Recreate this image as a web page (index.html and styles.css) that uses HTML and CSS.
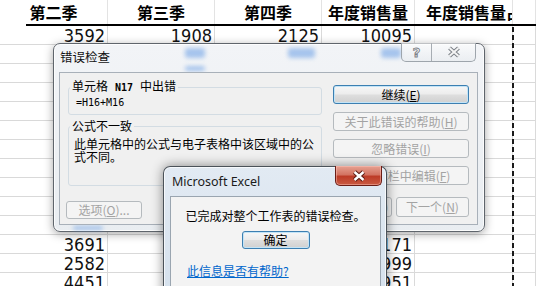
FILE: index.html
```html
<!DOCTYPE html>
<html>
<head>
<meta charset="utf-8">
<link rel="stylesheet" href="styles.css">
</head>
<body>
<div class="screen">
  <div class="sheet">
    <div class="row head">
      <div class="cell">第二季</div><div class="cell">第三季</div><div class="cell">第四季</div><div class="cell">年度销售量</div><div class="cell clip">年度销售量占比</div><div class="cell"></div>
    </div>
    <div class="rule"></div>
    <div class="row"><div class="cell num">3592</div><div class="cell num">1908</div><div class="cell num">2125</div><div class="cell num">10095</div><div class="cell"></div><div class="cell"></div></div>
    <div class="row"><div class="cell num">2861</div><div class="cell num">1597</div><div class="cell num">3082</div><div class="cell num">9830</div><div class="cell"></div><div class="cell"></div></div>
    <div class="row"><div class="cell num">3120</div><div class="cell num">2456</div><div class="cell num">2893</div><div class="cell num">10524</div><div class="cell"></div><div class="cell"></div></div>
    <div class="row"><div class="cell num">2987</div><div class="cell num">2215</div><div class="cell num">3310</div><div class="cell num">10376</div><div class="cell"></div><div class="cell"></div></div>
    <div class="row"><div class="cell num">3465</div><div class="cell num">1872</div><div class="cell num">2741</div><div class="cell num">9950</div><div class="cell"></div><div class="cell"></div></div>
    <div class="row"><div class="cell num">2734</div><div class="cell num">2690</div><div class="cell num">3158</div><div class="cell num">10802</div><div class="cell"></div><div class="cell"></div></div>
    <div class="row"><div class="cell num">3011</div><div class="cell num">2147</div><div class="cell num">2566</div><div class="cell num">9873</div><div class="cell"></div><div class="cell"></div></div>
    <div class="row"><div class="cell num">3278</div><div class="cell num">1935</div><div class="cell num">3024</div><div class="cell num">10441</div><div class="cell"></div><div class="cell"></div></div>
    <div class="row"><div class="cell num">2645</div><div class="cell num">2503</div><div class="cell num">2871</div><div class="cell num">9962</div><div class="cell"></div><div class="cell"></div></div>
    <div class="row"><div class="cell num">3390</div><div class="cell num">2268</div><div class="cell num">2715</div><div class="cell num">10539</div><div class="cell"></div><div class="cell"></div></div>
    <div class="row"><div class="cell num">3154</div><div class="cell num">1789</div><div class="cell num">3206</div><div class="cell num">10227</div><div class="cell"></div><div class="cell"></div></div>
    <div class="row"><div class="cell num">3691</div><div class="cell num">2740</div><div class="cell num">2258</div><div class="cell num">10171</div><div class="cell"></div><div class="cell"></div></div>
    <div class="row"><div class="cell num">2582</div><div class="cell num">3117</div><div class="cell num">2864</div><div class="cell num">10999</div><div class="cell"></div><div class="cell"></div></div>
    <div class="row"><div class="cell num">4451</div><div class="cell num">2085</div><div class="cell num">1963</div><div class="cell num">10951</div><div class="cell"></div><div class="cell"></div></div>
  </div>

  <div class="pagebreak"></div>

  <div class="win err">
    <div class="blob b1"></div><div class="blob b2"></div><div class="blob b3"></div><div class="blob b4"></div><div class="blob b5"></div>
    <div class="wtitle">错误检查</div>
    <div class="capbtns">
      <div class="cap help">?</div>
      <div class="cap shut">
        <svg width="14" height="12" viewBox="0 0 14 12"><path d="M2.5 2 L11.5 10 M11.5 2 L2.5 10" stroke="#7c8187" stroke-width="4"/><path d="M2.5 2 L11.5 10 M11.5 2 L2.5 10" stroke="#f4f4f4" stroke-width="2"/></svg>
      </div>
    </div>
    <div class="client">
      <div class="lcol">
        <fieldset class="grp g1"><legend>单元格<b class="ref">N17</b>中出错</legend><div class="formula">=H16+M16</div></fieldset>
        <fieldset class="grp g2"><legend>公式不一致</legend><div class="desc">此单元格中的公式与电子表格中该区域中的公式不同。</div></fieldset>
        <div class="btn dis opt">选项(<u>O</u>)...</div>
      </div>
      <div class="rcol">
        <div class="btn def">继续(<u>E</u>)</div>
        <div class="btn dis">关于此错误的帮助(<u>H</u>)</div>
        <div class="btn dis">忽略错误(<u>I</u>)</div>
        <div class="btn dis">在编辑栏中编辑(<u>F</u>)</div>
        <div class="pair"><div class="btn dis prev">上一个(<u>P</u>)</div><div class="btn dis next">下一个(<u>N</u>)</div></div>
      </div>
    </div>
  </div>

  <div class="win msg">
    <div class="mtitle">Microsoft Excel</div>
    <div class="mclose">
      <svg width="14" height="12" viewBox="0 0 14 12"><path d="M2.5 2 L11.5 10 M11.5 2 L2.5 10" stroke="#5b1d14" stroke-width="4.5"/><path d="M2.5 2 L11.5 10 M11.5 2 L2.5 10" stroke="#ffffff" stroke-width="2.4"/></svg>
    </div>
    <div class="mclient">
      <div class="mtext">已完成对整个工作表的错误检查。</div>
      <div class="btn def mok">确定</div>
      <a class="mlink" href="#">此信息是否有帮助?</a>
    </div>
  </div>
</div>
</body>
</html>
```

FILE: styles.css
```css
html, body {
  margin: 0;
  padding: 0;
  background: #ffffff;
}

.screen {
  position: relative;
  width: 536px;
  height: 286px;
  overflow: hidden;
  font-family: "Noto Sans CJK SC", sans-serif;
  font-size: 12px;
  color: #000;
}

/* ---------- spreadsheet ---------- */
.sheet {
  display: flex;
  flex-direction: column;
}

.row {
  display: grid;
  grid-template-columns: 108px 107px 107px 93px 98px 1fr;
  height: 19px;
  box-sizing: border-box;
  border-bottom: 1px solid #d9d9d9;
}

.row.head {
  height: 24px;
  border-bottom: none;
}

.cell {
  border-right: 1px solid #dadada;
  box-sizing: border-box;
  white-space: nowrap;
}

.row.head .cell {
  font-family: "Noto Sans CJK SC", sans-serif;
  font-weight: 700;
  font-size: 16px;
  line-height: 24px;
  text-align: center;
  border-right-color: #e3e3e3;
}

.row.head .cell.clip {
  text-align: left;
  padding-left: 11px;
  overflow: hidden;
}

.rule {
  height: 2px;
  margin-left: 26px;
  background: #000;
}

.cell.num {
  font-family: "Liberation Sans Narrow", "DejaVu Sans Condensed", sans-serif;
  font-size: 18px;
  line-height: 19px;
  text-align: right;
  padding-right: 2px;
  color: #111;
}

.pagebreak {
  position: absolute;
  left: 512px;
  top: 27px;
  width: 2px;
  height: 260px;
  background: repeating-linear-gradient(#1a1a1a 0 5px, transparent 5px 8px);
}

/* ---------- windows ---------- */
.win {
  position: absolute;
  box-sizing: border-box;
  display: flex;
  flex-direction: column;
}

.err {
  left: 53px;
  top: 43px;
  width: 432px;
  height: 189px;
  border: 1px solid #5f656c;
  border-radius: 7px;
  background: linear-gradient(#f2f4f7, #e9edf1);
  box-shadow: 0 2px 10px rgba(0, 0, 0, 0.35), inset 0 0 0 1px rgba(255, 255, 255, 0.8);
}

.blob {
  position: absolute;
  background: rgba(92, 150, 228, 0.5);
  filter: blur(2px);
  border-radius: 3px;
}
.b1 { left: 131px; top: 4px; width: 20px; height: 10px; }
.b2 { left: 131px; top: 22px; width: 20px; height: 5px; }
.b3 { left: 234px; top: 4px; width: 27px; height: 10px; }
.b4 { left: 327px; top: 4px; width: 20px; height: 10px; }
.b5 { left: 19px; top: 182px; width: 30px; height: 4px; }

.wtitle {
  position: relative;
  height: 28px;
  box-sizing: border-box;
  padding: 5px 0 0 6px;
  font-size: 12.5px;
  line-height: 16px;
  color: #111;
}

.capbtns {
  position: absolute;
  right: 8px;
  top: -1px;
  width: 75px;
  height: 19px;
  box-sizing: border-box;
  display: flex;
  border: 1px solid #9ea5ac;
  border-top: none;
  border-radius: 0 0 5px 5px;
  background: linear-gradient(rgba(255, 255, 255, 0.6), rgba(230, 234, 238, 0.6));
}

.cap {
  display: flex;
  align-items: center;
  justify-content: center;
}

.cap.help {
  width: 29px;
  border-right: 1px solid #a7adb3;
  font-family: "DejaVu Sans", sans-serif;
  font-weight: 700;
  font-size: 13px;
  color: #f4f4f4;
  -webkit-text-stroke: 0.9px #7c8187;
}

.cap.shut {
  flex: 1;
}

.client {
  position: relative;
  flex: 1;
  margin: 0 6px 6px 5px;
  border: 1px solid #a8b0b9;
  background: #f0f0f0;
  display: flex;
  gap: 11px;
  padding: 0 8px 0 6px;
}

.lcol {
  width: 256px;
  padding-top: 7px;
  display: flex;
  flex-direction: column;
}

.grp {
  margin: 0 0 0 2px;
  padding: 0;
  width: 254px;
  box-sizing: border-box;
  border: 1px solid #d3dce3;
  border-radius: 3px;
  min-inline-size: 0;
}

.grp legend {
  margin-left: 1px;
  padding: 0 2px;
  font-size: 12px;
  line-height: 12px;
}

.ref {
  font-family: "DejaVu Sans Mono", monospace;
  font-size: 10px;
  margin: 0 7px;
}

.formula {
  padding: 3px 0 5px 7px;
  font-family: "DejaVu Sans Mono", monospace;
  font-size: 10px;
  line-height: 12px;
}

.g2 {
  margin-top: 5px;
  height: 66px;
}

.desc {
  padding: 5px 5px 0 5px;
  font-size: 12px;
  line-height: 13px;
}

.btn {
  box-sizing: border-box;
  height: 19px;
  border: 1px solid #b5babe;
  border-radius: 3px;
  background: #f4f4f4;
  text-align: center;
  font-size: 12px;
  line-height: 17px;
  color: #a3a3a3;
  white-space: nowrap;
}

.btn.def {
  border-color: #3c7fb1;
  background: linear-gradient(#f7f7f7, #ececec 48%, #dedede 52%, #d0d0d0);
  box-shadow: inset 0 0 0 1px #c3e4f7;
  color: #000;
}

.btn.opt {
  width: 76px;
  height: 18px;
  line-height: 16px;
  margin-top: 15px;
}

.rcol {
  width: 136px;
  padding-top: 12px;
  display: flex;
  flex-direction: column;
  gap: 8px;
}

.pair {
  display: flex;
  justify-content: space-between;
  margin-top: 4px;
}

.pair .btn {
  height: 20px;
  line-height: 18px;
}
.prev { width: 59px; }
.next { width: 73px; }

/* ---------- message box ---------- */
.msg {
  left: 163px;
  top: 166px;
  width: 224px;
  height: 140px;
  border: 1px solid #4b5259;
  border-bottom: none;
  border-radius: 7px 7px 0 0;
  background: linear-gradient(#e2eaf3, #d4e0ec);
  box-shadow: 0 0 12px rgba(0, 0, 0, 0.45), inset 0 0 0 1px rgba(255, 255, 255, 0.7);
}

.mtitle {
  height: 29px;
  box-sizing: border-box;
  padding: 7px 0 0 8px;
  font-family: "Noto Sans", sans-serif;
  font-size: 12.5px;
  line-height: 16px;
  color: #1b1b1b;
}

.mclose {
  position: absolute;
  right: 4px;
  top: -1px;
  width: 47px;
  height: 20px;
  box-sizing: border-box;
  border: 1px solid #6a1d16;
  border-top: none;
  border-radius: 0 0 5px 5px;
  background: linear-gradient(#e6a191, #d37462 45%, #bd3c27 55%, #c95a42);
  box-shadow: inset 0 0 0 1px rgba(255, 200, 190, 0.45);
  display: flex;
  align-items: center;
  justify-content: center;
}

.mclient {
  flex: 1;
  margin: 0 5px 0 6px;
  border: 1px solid #9aa5b0;
  border-bottom: none;
  background: #f3f3f3;
  display: flex;
  flex-direction: column;
  align-items: center;
  padding-top: 11px;
}

.mtext {
  font-size: 12px;
  line-height: 16px;
}

.btn.mok {
  margin-top: 7px;
  width: 68px;
  height: 18px;
  line-height: 16px;
}

.mlink {
  align-self: flex-start;
  margin: 14px 0 0 16px;
  font-size: 12px;
  line-height: 16px;
  color: #0066cc;
  text-decoration: underline;
}
```
